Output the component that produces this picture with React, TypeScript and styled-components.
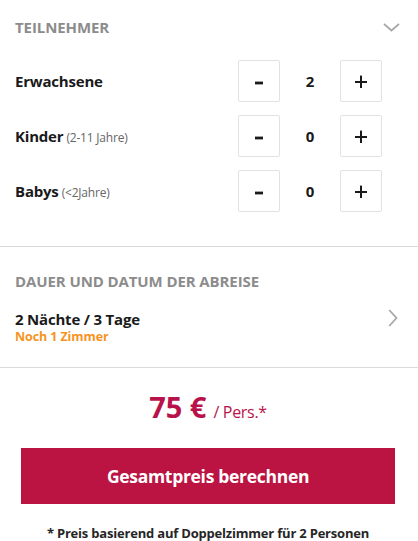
import React, { useState } from "react";
import styled, { createGlobalStyle } from "styled-components";

const Global = createGlobalStyle`
  html, body { margin: 0; padding: 0; background: #fff; }
  body { font-family: "Open Sans", Lato, sans-serif; color: #1a1a1a; }
  * { box-sizing: border-box; }
`;

const Page = styled.div`
  width: 418px;
  background: #fff;
`;

const Section = styled.section<{ $pad: string }>`
  padding: ${(p) => p.$pad};
  border-bottom: 1px solid #dadada;
`;

const HeaderRow = styled.div`
  display: flex;
  align-items: center;
  justify-content: space-between;
  height: 20px;
`;

const SectionTitle = styled.h2`
  margin: 0;
  font-size: 15px;
  line-height: 20px;
  font-weight: 700;
  color: #8c8c8c;
  text-transform: uppercase;
  letter-spacing: -0.1px;
`;

const Counters = styled.div`
  display: flex;
  flex-direction: column;
  gap: 13px;
  margin-top: 23px;
  padding-right: 18px;
`;

const CounterRow = styled.div`
  display: flex;
  align-items: center;
  justify-content: space-between;
  height: 42px;
`;

const Label = styled.div`
  font-size: 15px;
  font-weight: 700;
  color: #1a1a1a;
  letter-spacing: -0.2px;
`;

const Hint = styled.span`
  font-size: 12px;
  font-weight: 400;
  color: #666;
  margin-left: 3px;
  letter-spacing: -0.2px;
`;

const Stepper = styled.div`
  display: flex;
  align-items: center;
`;

const StepButton = styled.button`
  width: 42px;
  height: 42px;
  border: 1px solid #e2e2e2;
  border-radius: 2px;
  background: #fff;
  display: flex;
  align-items: center;
  justify-content: center;
  padding: 0;
  cursor: pointer;
  color: #1a1a1a;
`;

const Count = styled.span`
  width: 60px;
  text-align: center;
  font-size: 15px;
  font-weight: 700;
  color: #1a1a1a;
`;

const DurationRow = styled.div`
  display: flex;
  align-items: center;
  justify-content: space-between;
  padding-right: 20px;
`;

const DurationText = styled.div`
  display: flex;
  flex-direction: column;
`;

const Nights = styled.div`
  margin-top: 19px;
  font-size: 15px;
  line-height: 19px;
  font-weight: 700;
  color: #1a1a1a;
  letter-spacing: -0.2px;
`;

const Rooms = styled.div`
  font-size: 12.5px;
  line-height: 16px;
  font-weight: 700;
  color: #f7931e;
  letter-spacing: -0.1px;
`;

const PriceArea = styled.div`
  display: flex;
  flex-direction: column;
  align-items: center;
  padding: 20px 23px 0 21px;
`;

const Price = styled.div`
  display: flex;
  align-items: baseline;
  color: #b8124a;
`;

const Amount = styled.span`
  font-size: 29px;
  font-weight: 700;
  line-height: 38px;
`;

const PerPerson = styled.span`
  font-size: 16px;
  font-weight: 400;
  margin-left: 7px;
  letter-spacing: -0.3px;
`;

const CtaButton = styled.button`
  margin-top: 22px;
  width: 100%;
  height: 56px;
  border: none;
  background: #bb1442;
  color: #fff;
  font-family: inherit;
  font-size: 17.5px;
  font-weight: 700;
  letter-spacing: -0.3px;
  cursor: pointer;
`;

const Footnote = styled.p`
  margin: 20px 0 0;
  font-size: 13px;
  line-height: 18px;
  font-weight: 700;
  color: #262626;
  text-align: center;
  white-space: nowrap;
  letter-spacing: -0.2px;
`;

const Minus = () => (
  <svg width="8" height="8" viewBox="0 0 8 8">
    <rect x="0" y="4.6" width="8" height="2.8" fill="#1a1a1a" />
  </svg>
);

const Plus = () => (
  <svg width="12" height="14" viewBox="0 0 12 14">
    <rect x="0" y="7" width="12" height="2" fill="#1a1a1a" />
    <rect x="5" y="1.6" width="2" height="12.6" fill="#1a1a1a" />
  </svg>
);

const ChevronDown = () => (
  <svg width="17" height="9" viewBox="0 0 17 9">
    <path d="M1 1 L8.5 7.5 L16 1" fill="none" stroke="#a8a8a8" strokeWidth="1.8" />
  </svg>
);

const ChevronRight = () => (
  <svg width="10" height="18" viewBox="0 0 10 18">
    <path d="M1.2 1 L8.5 9 L1.2 17" fill="none" stroke="#a8a8a8" strokeWidth="1.8" />
  </svg>
);

type Row = { key: string; label: string; hint?: string; value: number };

export default function App() {
  const [rows, setRows] = useState<Row[]>([
    { key: "a", label: "Erwachsene", value: 2 },
    { key: "k", label: "Kinder", hint: "(2-11 Jahre)", value: 0 },
    { key: "b", label: "Babys", hint: "(<2Jahre)", value: 0 },
  ]);
  const change = (key: string, d: number) =>
    setRows((rs) => rs.map((r) => (r.key === key ? { ...r, value: Math.max(0, r.value + d) } : r)));

  return (
    <Page>
      <Global />
      <Section $pad="17px 18px 34px 15px">
        <HeaderRow>
          <SectionTitle>Teilnehmer</SectionTitle>
          <ChevronDown />
        </HeaderRow>
        <Counters>
          {rows.map((r) => (
            <CounterRow key={r.key}>
              <Label>
                {r.label}
                {r.hint && <Hint>{r.hint}</Hint>}
              </Label>
              <Stepper>
                <StepButton onClick={() => change(r.key, -1)} aria-label="weniger">
                  <Minus />
                </StepButton>
                <Count>{r.value}</Count>
                <StepButton onClick={() => change(r.key, 1)} aria-label="mehr">
                  <Plus />
                </StepButton>
              </Stepper>
            </CounterRow>
          ))}
        </Counters>
      </Section>
      <Section $pad="24px 0 22px 15px">
        <SectionTitle>Dauer und Datum der Abreise</SectionTitle>
        <DurationRow>
          <DurationText>
            <Nights>2 Nächte / 3 Tage</Nights>
            <Rooms>Noch 1 Zimmer</Rooms>
          </DurationText>
          <ChevronRight />
        </DurationRow>
      </Section>
      <PriceArea>
        <Price>
          <Amount>75 €</Amount>
          <PerPerson>/ Pers.*</PerPerson>
        </Price>
        <CtaButton>Gesamtpreis berechnen</CtaButton>
        <Footnote>* Preis basierend auf Doppelzimmer für 2 Personen</Footnote>
      </PriceArea>
    </Page>
  );
}
